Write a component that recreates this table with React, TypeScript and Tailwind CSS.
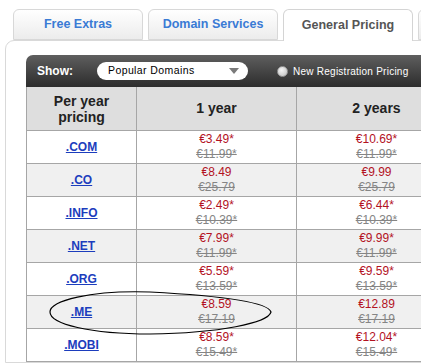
import React from 'react'

const rows = [
  { tld: '.COM', y1: ['€3.49*', '€11.99*'], y2: ['€10.69*', '€11.99*'] },
  { tld: '.CO', y1: ['€8.49', '€25.79'], y2: ['€9.99', '€25.79'] },
  { tld: '.INFO', y1: ['€2.49*', '€10.39*'], y2: ['€6.44*', '€10.39*'] },
  { tld: '.NET', y1: ['€7.99*', '€11.99*'], y2: ['€9.99*', '€11.99*'] },
  { tld: '.ORG', y1: ['€5.59*', '€13.59*'], y2: ['€9.59*', '€13.59*'] },
  { tld: '.ME', y1: ['€8.59', '€17.19'], y2: ['€12.89', '€17.19'] },
  { tld: '.MOBI', y1: ['€8.59*', '€15.49*'], y2: ['€12.04*', '€15.49*'] },
]

function Tab({ label, active }: { label: string; active?: boolean }) {
  return (
    <div
      className={
        active
          ? 'w-[130px] h-[32px] shrink-0 whitespace-nowrap rounded-t-[6px] border border-b-0 border-[#d4d4d4] bg-white flex items-center justify-center text-[12.5px] font-bold text-[#555555] relative z-10'
          : 'w-[130px] h-[31px] shrink-0 whitespace-nowrap rounded-t-[6px] border border-[#d8d8d8] bg-gradient-to-b from-white to-[#ececec] flex items-center justify-center text-[12.5px] font-bold text-[#3a7bd5]'
      }
    >
      {label}
    </div>
  )
}

function Price({ p }: { p: string[] }) {
  return (
    <div className="flex flex-col items-center text-[12px] leading-[15px]">
      <span className="text-[#b3121f]">{p[0]}</span>
      <span className="text-[#858585] line-through">{p[1]}</span>
    </div>
  )
}

export default function App() {
  return (
    <div className="w-[421px] h-[363px] overflow-hidden bg-white relative font-['Liberation_Sans',Arial,sans-serif]">
      <div className="flex items-start gap-[5px] pl-[13px] pt-[9px] h-[41px] w-[700px]">
        <Tab label="Free Extras" />
        <Tab label="Domain Services" />
        <Tab label="General Pricing" active />
        <div className="w-[130px] h-[31px] rounded-t-[6px] border border-[#d8d8d8] bg-gradient-to-b from-white to-[#ececec] shrink-0" />
      </div>

      <div className="ml-[5px] -mt-px w-[520px] rounded-tl-[9px] border border-[#d9d9d9] pl-[20px] pt-[14px]">
        <div className="h-[32px] w-[500px] rounded-tl-[7px] bg-gradient-to-b from-[#5f5f5f] to-[#2d2d2d] flex items-center">
          <span className="w-[71px] shrink-0 pl-[11px] text-[12px] font-bold text-white">Show:</span>
          <div className="w-[151px] h-[18px] shrink-0 rounded-[9px] bg-white flex items-center pl-[11px] pr-[6px]">
            <span className="text-[10.5px] tracking-[0.4px] text-black whitespace-nowrap">Popular Domains</span>
            <svg className="ml-auto mr-[3px]" width="10" height="6" viewBox="0 0 10 6">
              <path d="M0 0 L10 0 L5 6 Z" fill="#7a7a7a" />
            </svg>
          </div>
          <div className="ml-[29px] w-[11px] h-[11px] shrink-0 rounded-full border border-[#9a9a9a] bg-[radial-gradient(circle_at_40%_35%,#f4f4f4,#bdbdbd)]" />
          <span className="ml-[5px] whitespace-nowrap text-[10px] tracking-[0.25px] text-white">New Registration Pricing</span>
        </div>

        <div className="grid grid-cols-[110px_160px_160px] border-l border-[#a6a6a6] text-[#222]">
          <div className="h-[44px] bg-[#dedede] border-r border-b border-[#a6a6a6] flex items-center justify-center text-center text-[14px] font-bold leading-[16px]">
            Per year
            <br />
            pricing
          </div>
          <div className="h-[44px] bg-[#dedede] border-r border-b border-[#a6a6a6] flex items-center justify-center text-[14px] font-bold">
            1 year
          </div>
          <div className="h-[44px] bg-[#dedede] border-r border-b border-[#a6a6a6] flex items-center justify-center text-[14px] font-bold">
            2 years
          </div>
          {rows.map((r, i) => {
            const bg = i % 2 === 1 ? 'bg-[#f0f0f0]' : 'bg-white'
            return (
              <React.Fragment key={r.tld}>
                <div className={`h-[33px] ${bg} border-r border-b border-[#a6a6a6] flex items-center justify-center`}>
                  <a className="text-[12px] font-bold text-[#1c3dbd] underline">{r.tld}</a>
                </div>
                <div className={`h-[33px] ${bg} border-r border-b border-[#a6a6a6] flex items-center justify-center`}>
                  <Price p={r.y1} />
                </div>
                <div className={`h-[33px] ${bg} border-r border-b border-[#a6a6a6] flex items-center justify-center`}>
                  <Price p={r.y2} />
                </div>
              </React.Fragment>
            )
          })}
        </div>
      </div>

      <svg className="absolute left-0 top-0 pointer-events-none" width="421" height="363" viewBox="0 0 421 363">
        <path
          d="M271 312 C268 302 225 296 150 292 C90 290 50 301 50 312 C50 324 90 334 150 334 C220 333 268 323 271 312 Z"
          fill="none"
          stroke="#000"
          strokeWidth="1.2"
        />
      </svg>
    </div>
  )
}
